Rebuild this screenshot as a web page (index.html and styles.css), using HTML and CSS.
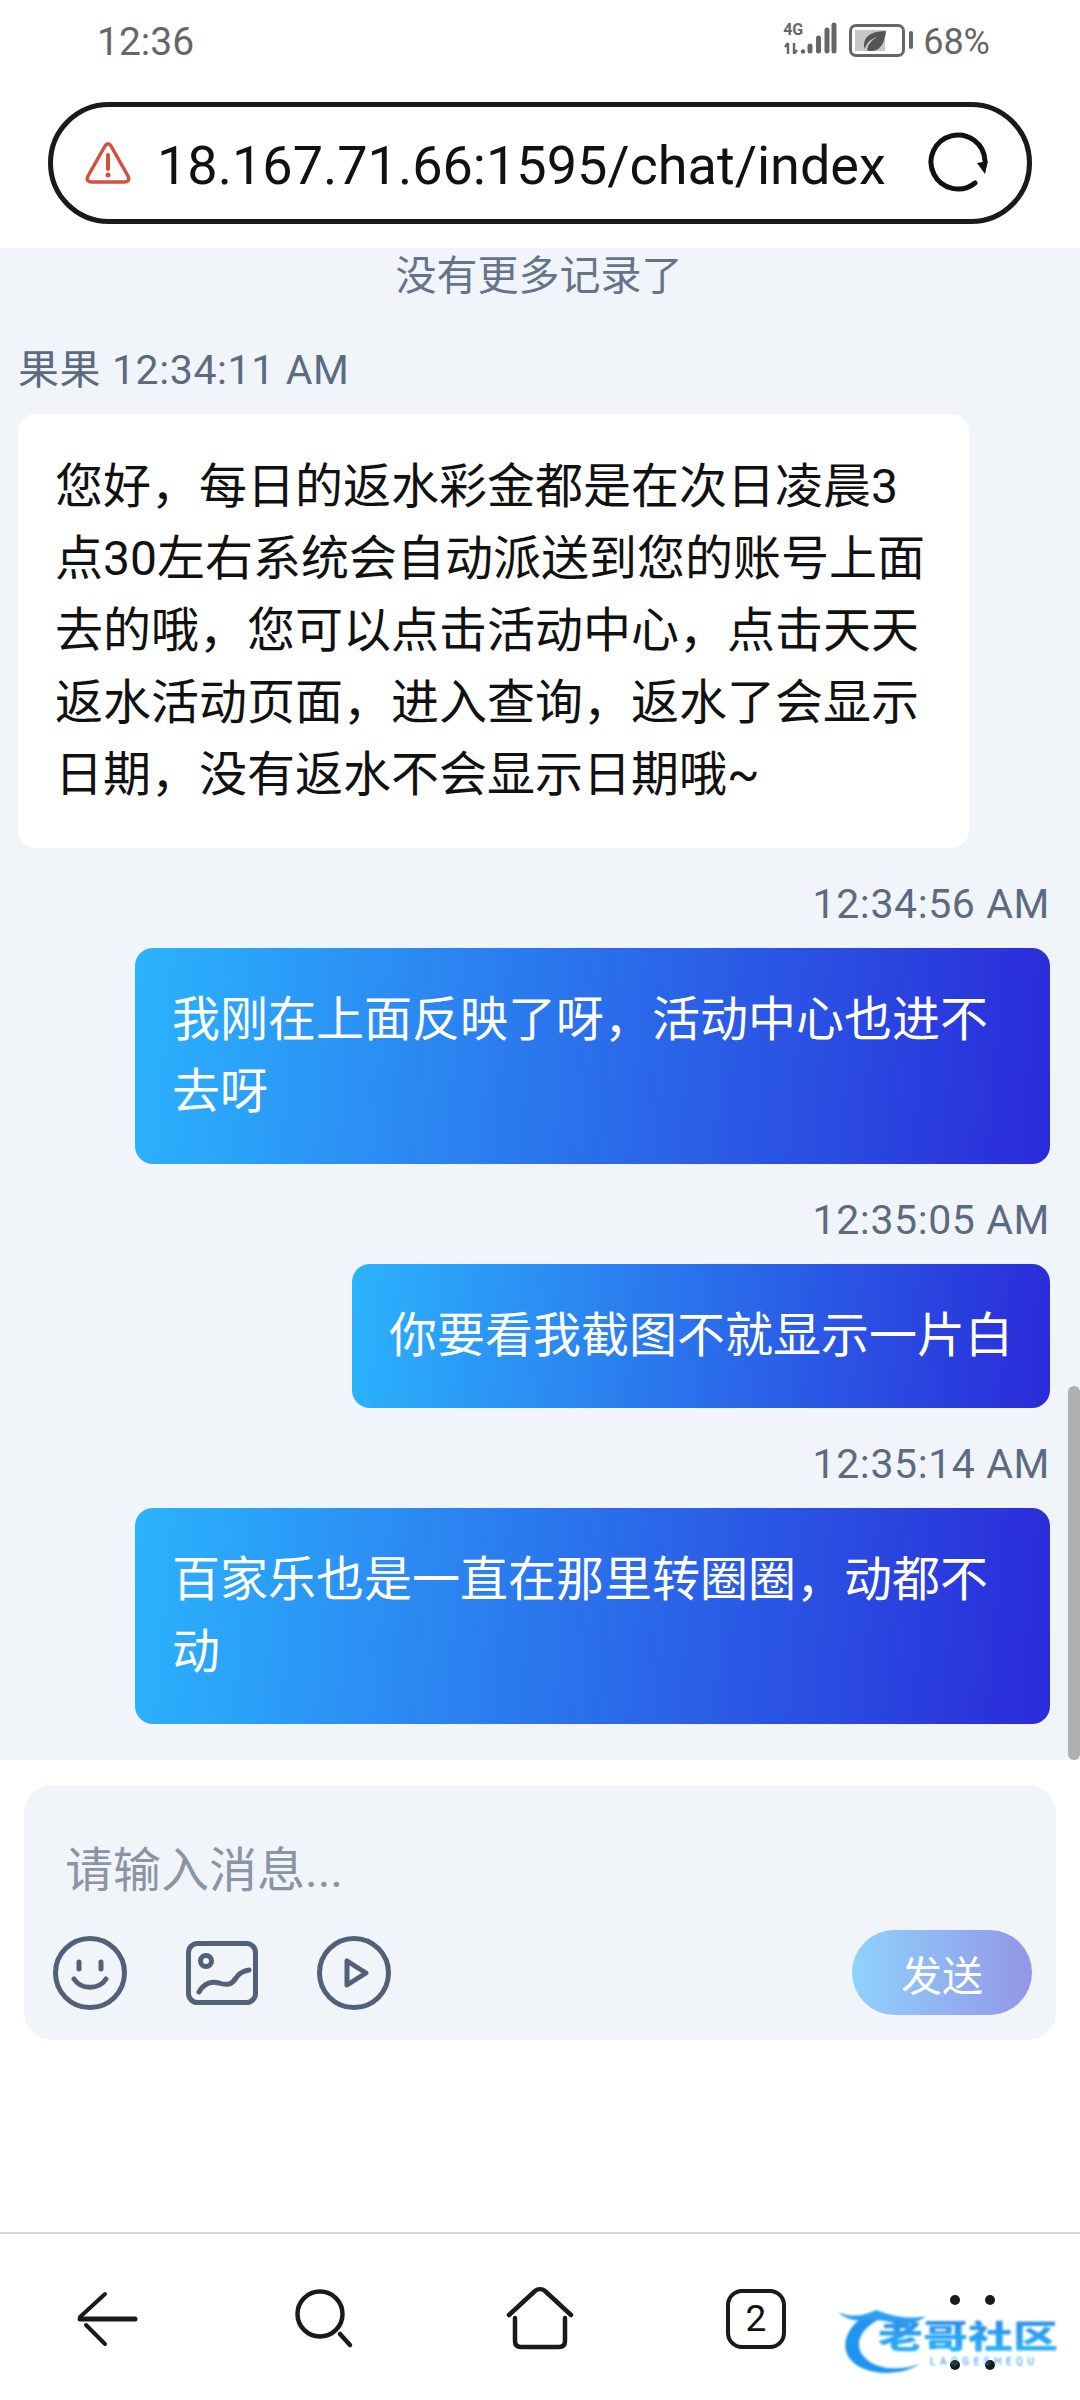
FILE: index.html
```html
<!DOCTYPE html>
<html lang="zh">
<head>
    <meta charset="UTF-8">
    <meta name="viewport" content="width=device-width, initial-scale=1.0">
    <title>chat</title>
    <link rel="stylesheet" href="styles.css">
</head>
<body>
<div class="screen">

    <div class="status-bar">
        <span class="status-time">12:36</span>
        <div class="status-right">
            <div class="signal">
                <div class="net">
                    <span class="net-type">4G</span>
                    <svg width="24" height="12" viewBox="0 0 24 12"><path d="M5 1v11M2 5l3-4M11 1v11M11 12l3-4" fill="none" stroke="#666" stroke-width="2.4"/><circle cx="20" cy="9.5" r="2.2" fill="#666"/></svg>
                </div>
                <svg class="bars" width="30" height="32" viewBox="0 0 30 32"><g stroke="#666" stroke-width="5" stroke-linecap="round"><path d="M3 24v5M11.500 16v13M20 8v21M27 3v26"/></g></svg>
            </div>
            <div class="battery">
                <div class="battery-body">
                    <div class="battery-fill"></div>
                    <svg class="leaf" width="24" height="22" viewBox="0 0 24 22"><path d="M23 1C12 1 2 4 1 14c0 2 0 3 1 5 1-6 6-10 12-12-5 3-9 7-10 13 1 1 3 1 5 1C18 21 22 11 23 1z" fill="#555"/></svg>
                </div>
                <span class="battery-tip"></span>
            </div>
            <span class="status-pct">68%</span>
        </div>
    </div>

    <div class="url-bar">
        <svg class="url-warn" width="46" height="42" viewBox="0 0 46 42">
            <path d="M20 4 3 34c-2 4 0 6 4 6h32c4 0 6-2 4-6L26 4c-2-3-4-3-6 0z" fill="none" stroke="#d4503a" stroke-width="3.5" stroke-linejoin="round"/>
            <path d="M23 13v14" stroke="#d4503a" stroke-width="4" stroke-linecap="round"/>
            <circle cx="23" cy="33" r="2.5" fill="#d4503a"/>
        </svg>
        <div class="url-text">18.167.71.66:1595/chat/index</div>
        <svg class="url-reload" width="62" height="62" viewBox="0 0 62 62">
            <path d="M48 51A27 27 0 1 1 58 29" fill="none" stroke="#111" stroke-width="5" stroke-linecap="round"/>
            <path d="M50 31 61 29 58 42z" fill="#111"/>
        </svg>
    </div>

    <div class="chat">
        <div class="no-more">没有更多记录了</div>

        <div class="msg msg-in">
            <div class="msg-meta">果果 12:34:11 AM</div>
            <div class="bubble bubble-in">您好，每日的返水彩金都是在次日凌晨3点30左右系统会自动派送到您的账号上面去的哦，您可以点击活动中心，点击天天返水活动页面，进入查询，返水了会显示日期，没有返水不会显示日期哦~</div>
        </div>

        <div class="msg msg-out">
            <div class="msg-meta">12:34:56 AM</div>
            <div class="bubble bubble-out">我刚在上面反映了呀，活动中心也进不去呀</div>
        </div>

        <div class="msg msg-out">
            <div class="msg-meta">12:35:05 AM</div>
            <div class="bubble bubble-out">你要看我截图不就显示一片白</div>
        </div>

        <div class="msg msg-out">
            <div class="msg-meta">12:35:14 AM</div>
            <div class="bubble bubble-out">百家乐也是一直在那里转圈圈，动都不动</div>
        </div>

        <div class="scroll-thumb"></div>
    </div>

    <div class="composer">
        <div class="composer-input">请输入消息...</div>
        <div class="composer-tools">
            <div class="tool-icons">
                <svg width="76" height="76" viewBox="0 0 76 76" fill="none" stroke="#526078" stroke-width="5" stroke-linecap="round">
                    <circle cx="38" cy="38" r="34.5"/>
                    <path d="M27 27v7M49 27v7"/>
                    <path d="M22 44c7 11 25 11 32 0"/>
                </svg>
                <svg width="72" height="64" viewBox="0 0 72 64" fill="none" stroke="#526078" stroke-width="5" stroke-linecap="round">
                    <rect x="2.5" y="2.5" width="67" height="59" rx="9"/>
                    <circle cx="20" cy="20" r="5.5"/>
                    <path d="M13 51c5-9 13-11 20-9 9 3 13 1 17-5 3-5 7-7 13-8"/>
                </svg>
                <svg width="76" height="76" viewBox="0 0 76 76" fill="none" stroke="#526078" stroke-width="5" stroke-linejoin="round">
                    <circle cx="38" cy="38" r="34.5"/>
                    <path d="M31 26v24l19-12z"/>
                </svg>
            </div>
            <button class="send-btn">发送</button>
        </div>
    </div>

    <div class="bottom-gap"></div>

    <div class="nav">
        <div class="nav-item">
            <svg width="72" height="72" viewBox="0 0 72 72" fill="none" stroke="#1a1a1a" stroke-linecap="round">
                <path d="M8 35h55" stroke-width="5"/>
                <path d="M8 33 33 10M14 41 33 60" stroke-width="4"/>
            </svg>
        </div>
        <div class="nav-item">
            <svg width="72" height="72" viewBox="0 0 72 72" fill="none" stroke="#1a1a1a" stroke-linecap="round">
                <circle cx="32" cy="30" r="22.500" stroke-width="4.5"/>
                <path d="M52 50 62 61" stroke-width="4.5"/>
            </svg>
        </div>
        <div class="nav-item">
            <svg width="72" height="72" viewBox="0 0 72 72" fill="none" stroke="#1a1a1a" stroke-linecap="round" stroke-linejoin="round" stroke-width="4.5">
                <path d="M5 31 31 7c3-2.500 7-2.500 10 0l26 24"/>
                <path d="M11 34v23c0 4 2 6 6 6h38c4 0 6-2 6-6V34"/>
            </svg>
        </div>
        <div class="nav-item">
            <div class="tab-count">2</div>
        </div>
        <div class="nav-item">
            <div class="nav-more">
                <span></span><span></span><span></span><span></span>
            </div>
        </div>
        <div class="watermark">
            <svg class="wm-dragon" width="120" height="76" viewBox="0 0 120 76" fill="none">
                <path d="M30 8C4 22-2 50 24 62c18 8 42 6 58-4-16 6-38 6-50-2C14 44 18 24 44 12z" fill="#1f95ef"/>
                <path d="M0 6c14 6 26 4 38-2 16 6 32 10 50 6-8 6-16 10-26 8-12-2-24-6-36-4C16 16 6 12 0 6z" fill="#2b9ff2"/>
            </svg>
            <span class="wm-name">老哥社区</span>
            <span class="wm-sub">LAOGESHEQU</span>
        </div>
    </div>

</div>
</body>
</html>
```

FILE: styles.css
```css
* {
    box-sizing: border-box;
}

body {
    margin: 0;
    background-color: white;
    font-family: Roboto, "Noto Sans CJK SC", sans-serif;
}

.screen {
    width: 1080px;
    height: 2400px;
    display: flex;
    flex-direction: column;
    overflow: hidden;
}

/* barra de estado */
.status-bar {
    height: 80px;
    flex: none;
    display: flex;
    justify-content: space-between;
    align-items: center;
    padding: 4px 90px 0 97px;
    color: #666;
}

.status-time {
    font-size: 39px;
}

.status-right {
    display: flex;
    align-items: center;
}

.signal {
    display: flex;
    align-items: flex-end;
    justify-content: space-between;
    height: 32px;
    width: 54px;
    margin: 0 12px 8px 0;
}

.net {
    display: flex;
    flex-direction: column;
    width: 24px;
    height: 32px;
    justify-content: space-between;
}

.net-type {
    font-size: 16px;
    line-height: 15px;
    font-weight: 700;
}

.battery {
    display: flex;
    align-items: center;
    margin: 0 10px 4px 0;
}

.battery-body {
    position: relative;
    width: 56px;
    height: 33px;
    border: 3.5px solid #666;
    border-radius: 7px;
    padding: 3px;
}

.battery-fill {
    width: 68%;
    height: 100%;
    background-color: #c8c8c8;
}

.leaf {
    position: absolute;
    left: 11px;
    top: 3px;
}

.battery-tip {
    width: 4px;
    height: 18px;
    margin-left: 4px;
    background-color: #666;
    border-radius: 2px;
}

.status-pct {
    font-size: 36px;
}

/* barra de url */
.url-bar {
    flex: none;
    height: 122px;
    margin: 22px 48px 24px;
    padding: 0 40px 0 32px;
    display: flex;
    align-items: center;
    border: 5px solid #1a1a1a;
    border-radius: 61px;
}

.url-warn {
    flex: none;
    margin-right: 26px;
}

.url-text {
    flex: none;
    width: 730px;
    padding-top: 4px;
    overflow: hidden;
    white-space: nowrap;
    font-size: 54px;
    color: #111;
}

.url-reload {
    flex: none;
    margin-left: 40px;
}

/* chat */
.chat {
    position: relative;
    flex: none;
    height: 1512px;
    padding: 0 30px 0 18px;
    background-color: #f1f5f9;
    overflow: hidden;
}

.no-more {
    height: 56px;
    line-height: 56px;
    padding-left: 10px;
    text-align: center;
    font-size: 41px;
    color: #64748b;
    margin-bottom: 38px;
}

.msg {
    margin-top: 28px;
    display: flex;
    flex-direction: column;
}

.msg-out {
    align-items: flex-end;
}

.msg-meta {
    height: 56px;
    line-height: 56px;
    margin-bottom: 16px;
    font-size: 41px;
    letter-spacing: 0.6px;
    color: #5b6b82;
}

.bubble {
    width: fit-content;
    padding: 36px 37px;
    border-radius: 18px;
    font-size: 48px;
    line-height: 72px;
}

.bubble-in {
    max-width: 951px;
    padding-top: 37px;
    padding-bottom: 37px;
    background-color: white;
    color: #111;
}

.bubble-out {
    max-width: 915px;
    background: linear-gradient(95deg, #2bb3fd, #2a2bd9);
    color: white;
}

.scroll-thumb {
    position: absolute;
    right: 0;
    bottom: 0;
    width: 12px;
    height: 374px;
    background-color: #b0b0b0;
    border-radius: 6px;
}

/* caja de mensaje */
.composer {
    flex: none;
    height: 255px;
    margin: 25px 24px 0;
    padding: 51px 24px 0 28px;
    background-color: #f1f5f9;
    border-radius: 28px;
}

.composer-input {
    height: 70px;
    line-height: 70px;
    padding-left: 13px;
    font-size: 48px;
    color: #8a94a6;
}

.composer-tools {
    display: flex;
    justify-content: space-between;
    align-items: center;
    margin-top: 24px;
}

.tool-icons {
    display: flex;
    align-items: center;
    gap: 58px;
}

.send-btn {
    width: 180px;
    height: 85px;
    border: none;
    border-radius: 43px;
    background: linear-gradient(90deg, #8fd2fb, #9396e8);
    color: white;
    font-family: inherit;
    font-size: 41px;
}

.bottom-gap {
    flex: 1;
}

/* navegacion inferior */
.nav {
    position: relative;
    flex: none;
    height: 168px;
    display: grid;
    grid-template-columns: repeat(5, 1fr);
    border-top: 2px solid #d4d4d4;
    padding-top: 50px;
}

.nav-item {
    display: flex;
    justify-content: center;
}

.nav-item svg {
    display: block;
}

.tab-count {
    width: 60px;
    height: 60px;
    margin-top: 5px;
    border: 4.5px solid #1a1a1a;
    border-radius: 16px;
    text-align: center;
    font-size: 37px;
    line-height: 51px;
    color: #111;
}

.nav-more {
    display: grid;
    grid-template-columns: 10px 10px;
    column-gap: 25px;
    row-gap: 24px;
    margin-top: 11px;
}

.nav-more span {
    width: 10px;
    height: 10px;
    border-radius: 50%;
    background-color: #1a1a1a;
}

.watermark {
    position: absolute;
    left: 838px;
    top: 72px;
    width: 230px;
    height: 80px;
    filter: blur(0.8px);
    color: #1f95ef;
}

.wm-dragon {
    position: absolute;
    left: 0;
    top: 0;
}

.wm-name {
    position: absolute;
    left: 40px;
    top: 4px;
    font-size: 45px;
    line-height: 54px;
    font-weight: 900;
    white-space: nowrap;
    transform: scaleY(0.72);
    background: linear-gradient(180deg, #2f8fe8, #28b4fa);
    -webkit-background-clip: text;
    background-clip: text;
    color: transparent;
}

.wm-sub {
    position: absolute;
    left: 92px;
    top: 50px;
    font-size: 10px;
    line-height: 12px;
    letter-spacing: 4.5px;
    white-space: nowrap;
}
```
